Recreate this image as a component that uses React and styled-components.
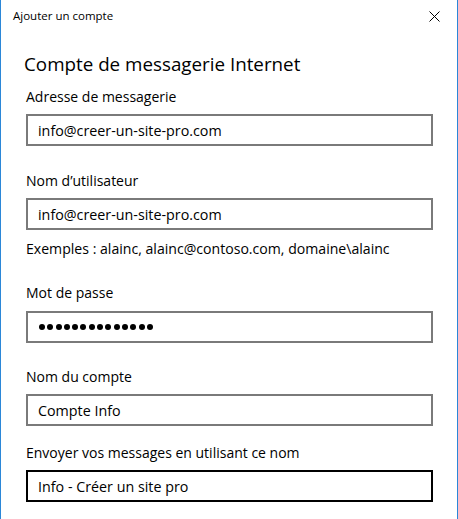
import React from "react";
import styled, { createGlobalStyle } from "styled-components";

const Global = createGlobalStyle`
  html, body { margin: 0; padding: 0; background: #fff; }
  body { font-family: "Open Sans", "Noto Sans", sans-serif; color: #000; }
`;

const Window = styled.div`
  box-sizing: border-box;
  width: 458px;
  height: 519px;
  border-left: 1px solid #2b87d8;
  border-right: 1px solid #2b87d8;
  background: #fff;
  display: flex;
  flex-direction: column;
  overflow: hidden;
`;

const TitleBar = styled.div`
  height: 32px;
  display: flex;
  align-items: center;
  justify-content: space-between;
  padding-left: 12px;
  padding-right: 17px;
`;

const TitleText = styled.span`
  font-size: 11.5px;
  line-height: 16px;
  color: #000;
`;

const CloseButton = styled.button`
  border: 0;
  background: transparent;
  padding: 0;
  width: 11px;
  height: 11px;
  display: flex;
  align-items: center;
  justify-content: center;
`;

const Content = styled.div`
  padding: 0 24px;
  display: flex;
  flex-direction: column;
`;

const Heading = styled.h1`
  margin: 18px 0 0 -1px;
  font-weight: 400;
  font-size: 18.8px;
  line-height: 28px;
`;

const Field = styled.div`
  margin-top: ${(p) => p.$top}px;
  display: flex;
  flex-direction: column;
`;

const Label = styled.label`
  font-size: 14px;
  line-height: 20px;
  padding-left: 1px;
  margin-bottom: ${(p) => p.$gap ?? 7}px;
`;

const Box = styled.div`
  box-sizing: border-box;
  height: 32px;
  border: 2px solid ${(p) => (p.$focused ? "#000" : "#7a7a7a")};
  display: flex;
  align-items: center;
  padding: 0 10px;
  font-size: 14.3px;
  margin-left: 1px;
`;

const Hint = styled.div`
  margin-top: 9px;
  font-size: 14.1px;
  line-height: 20px;
  padding-left: 1px;
`;

const Dots = styled.div`
  display: flex;
  gap: 2.3px;
  padding-left: 1px;
`;

const Dot = styled.span`
  width: 6px;
  height: 6px;
  border-radius: 50%;
  background: #000;
`;

function CloseIcon() {
  return (
    <svg width="11" height="11" viewBox="0 0 11 11">
      <path d="M0.5 0.5 L10.5 10.5 M10.5 0.5 L0.5 10.5" stroke="#000" strokeWidth="1" fill="none" />
    </svg>
  );
}

export default function App() {
  return (
    <>
      <Global />
      <Window>
        <TitleBar>
          <TitleText>Ajouter un compte</TitleText>
          <CloseButton aria-label="Fermer">
            <CloseIcon />
          </CloseButton>
        </TitleBar>
        <Content>
          <Heading>Compte de messagerie Internet</Heading>
          <Field $top={9}>
            <Label>Adresse de messagerie</Label>
            <Box>info@creer-un-site-pro.com</Box>
          </Field>
          <Field $top={25}>
            <Label>Nom d’utilisateur</Label>
            <Box>info@creer-un-site-pro.com</Box>
          </Field>
          <Hint>Exemples : alainc, alainc@contoso.com, domaine\alainc</Hint>
          <Field $top={24}>
            <Label $gap={8}>Mot de passe</Label>
            <Box>
              <Dots>
                {Array.from({ length: 14 }).map((_, i) => (
                  <Dot key={i} />
                ))}
              </Dots>
            </Box>
          </Field>
          <Field $top={24}>
            <Label>Nom du compte</Label>
            <Box>Compte Info</Box>
          </Field>
          <Field $top={17}>
            <Label>Envoyer vos messages en utilisant ce nom</Label>
            <Box $focused>Info - Créer un site pro</Box>
          </Field>
        </Content>
      </Window>
    </>
  );
}
